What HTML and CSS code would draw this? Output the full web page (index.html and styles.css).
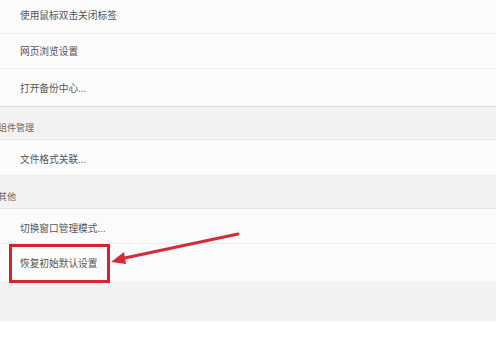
FILE: index.html
```html
<!DOCTYPE html>
<html lang="zh-CN">
  <head>
    <meta charset="UTF-8" />
    <meta name="viewport" content="width=device-width, initial-scale=1.0" />
    <title>设置</title>
    <link rel="stylesheet" href="styles.css">
  </head>
  <body>
    <div class="settings">
      <div class="row row-first">使用鼠标双击关闭标签</div>
      <div class="row">网页浏览设置</div>
      <div class="row row-last">打开备份中心...</div>
      <div class="section">组件管理</div>
      <div class="row row-single">文件格式关联...</div>
      <div class="section">其他</div>
      <div class="row row-low">切换窗口管理模式...</div>
      <div class="row row-mark">
        恢复初始默认设置
        <span class="mark-box"></span>
      </div>
      <div class="footer-gap"></div>
    </div>
    <svg class="arrow" width="496" height="349" viewBox="0 0 496 349">
      <line x1="238" y1="234" x2="120" y2="259" stroke="#d42a3a" stroke-width="3" stroke-linecap="round" />
      <polygon points="111,262 124,252 126,264" fill="#d42a3a" />
    </svg>
  </body>
</html>
```

FILE: styles.css
```css
body {
  margin: 0;
  padding: 0;
  background-color: #fff;
  font-family: "Noto Sans CJK SC", "Noto Sans", sans-serif;
  position: relative;
}
.settings {
  width: 496px;
}
.row {
  height: 34px;
  display: flex;
  align-items: center;
  padding-left: 20px;
  background-color: #fbfbfb;
  border-bottom: 1px solid #ececec;
  color: #555;
  font-size: 9.7px;
}
.row-first {
  height: 30px;
  padding-bottom: 3px;
}
.row-last {
  height: 37px;
  border-bottom: 1px solid #dcdcdc;
}
.row-single {
  height: 33px;
  padding-top: 2px;
}
.row-low {
  height: 31px;
  padding-top: 3px;
}
.section {
  height: 24px;
  padding-top: 8px;
  display: flex;
  align-items: center;
  padding-left: 0;
  text-indent: -2px;
  background-color: #f2f2f2;
  border-bottom: 1px solid #e6e6e6;
  color: #666;
  font-size: 9px;
}
.row-mark {
  position: relative;
  height: 38px;
  border-bottom: none;
}
.mark-box {
  position: absolute;
  left: 9px;
  top: 0;
  width: 95px;
  height: 33px;
  border: 3px solid #d7222f;
}
.footer-gap {
  height: 38px;
  background-color: #f2f2f2;
  border-top: 1px solid #ebebeb;
}
.arrow {
  position: absolute;
  left: 0;
  top: 0;
}
```
